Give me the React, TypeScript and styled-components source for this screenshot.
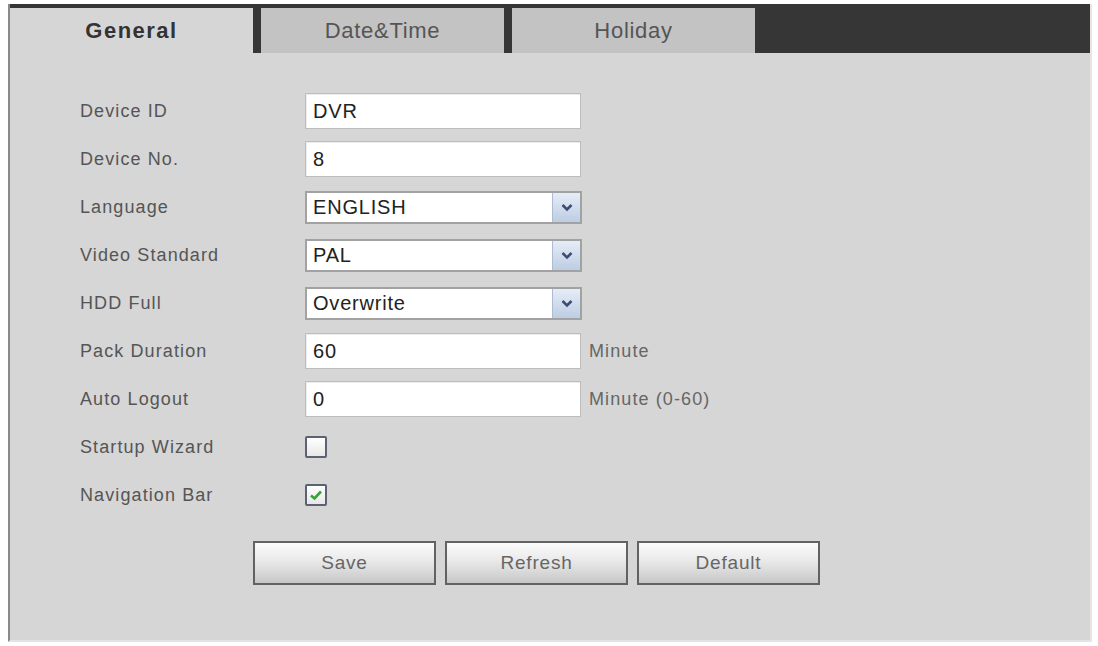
import React from 'react'
import styled, { createGlobalStyle } from 'styled-components'

const GlobalStyle = createGlobalStyle`
  body {
    margin: 0;
    background: #ffffff;
    font-family: 'Liberation Sans', Arial, sans-serif;
  }
`

const Page = styled.div`
  padding: 4px 0 0 8px;
`

const Panel = styled.div`
  width: 1084px;
  height: 638px;
  box-sizing: border-box;
  background: #d6d6d6;
  border-left: 2px solid #8a8a8a;
  border-right: 2px solid #e6e6e6;
  border-bottom: 2px solid #e4e4e4;
  display: flex;
  flex-direction: column;
`

const TabBar = styled.div`
  display: flex;
  gap: 8px;
  height: 49px;
  padding-top: 4px;
  box-sizing: border-box;
  background: #363636;
`

const Tab = styled.div<{ $active?: boolean }>`
  width: 243px;
  display: flex;
  align-items: center;
  justify-content: center;
  background: ${(p) => (p.$active ? '#d6d6d6' : '#c3c3c3')};
  color: ${(p) => (p.$active ? '#333' : '#555')};
  font-size: 22px;
  font-weight: ${(p) => (p.$active ? 'bold' : 'normal')};
  letter-spacing: ${(p) => (p.$active ? '1.5px' : '0.7px')};
`

const Form = styled.div`
  padding: 34px 0 0 70px;
`

const Row = styled.div`
  display: flex;
  align-items: center;
  height: 48px;
`

const Label = styled.div`
  width: 225px;
  color: #555;
  font-size: 18px;
  letter-spacing: 1.1px;
`

const TextInput = styled.input`
  width: 276px;
  height: 36px;
  box-sizing: border-box;
  border: 1px solid #bdbdbd;
  box-shadow: inset 1px 1px 0 #ececec;
  background: #fff;
  padding: 0 0 0 7px;
  margin: 0;
  font-family: inherit;
  font-size: 20px;
  letter-spacing: 0.8px;
  color: #222;
  outline: none;
`

const SelectBox = styled.div`
  width: 277px;
  height: 33px;
  box-sizing: border-box;
  border: 2px solid #a2a2a2;
  background: #fff;
  display: flex;
  align-items: stretch;
`

const SelectValue = styled.div`
  flex: 1;
  display: flex;
  align-items: center;
  padding-left: 6px;
  font-size: 20px;
  letter-spacing: 0.8px;
  color: #222;
`

const DropButton = styled.div`
  width: 27px;
  display: flex;
  align-items: center;
  justify-content: center;
  border-left: 1px solid #aebbd0;
  background: linear-gradient(#e6edf7, #bccde3);
`

const Suffix = styled.span`
  margin-left: 8px;
  color: #666;
  font-size: 18px;
  letter-spacing: 1.1px;
`

const CheckBox = styled.span`
  width: 22px;
  height: 22px;
  box-sizing: border-box;
  border: 2px solid #5b6372;
  border-radius: 2px;
  background: linear-gradient(#ffffff, #e7e7e7);
  display: flex;
  align-items: center;
  justify-content: center;
`

const ButtonRow = styled.div`
  display: flex;
  gap: 9px;
  margin: 22px 0 0 173px;
`

const Button = styled.button`
  width: 183px;
  height: 44px;
  box-sizing: border-box;
  border: 2px solid #626262;
  background: linear-gradient(#fbfbfb, #e9e9e9 45%, #c7c7c7);
  color: #666;
  font-family: inherit;
  font-size: 19px;
  letter-spacing: 0.8px;
  padding: 0;
`

const Chevron = () => (
  <svg width="12" height="9" viewBox="0 0 12 9">
    <path d="M1.5 2 L6 6.5 L10.5 2" fill="none" stroke="#3c4d70" strokeWidth="2.6" />
  </svg>
)

const Check = () => (
  <svg width="14" height="12" viewBox="0 0 14 12">
    <path d="M2 6.5 L5.5 9.5 L12 2.5" fill="none" stroke="#37a13a" strokeWidth="2.6" />
  </svg>
)

const Select = ({ value }: { value: string }) => (
  <SelectBox>
    <SelectValue>{value}</SelectValue>
    <DropButton>
      <Chevron />
    </DropButton>
  </SelectBox>
)

const App = () => (
  <Page>
    <GlobalStyle />
    <Panel>
      <TabBar>
        <Tab $active>General</Tab>
        <Tab>Date&amp;Time</Tab>
        <Tab>Holiday</Tab>
      </TabBar>
      <Form>
        <Row>
          <Label>Device ID</Label>
          <TextInput defaultValue="DVR" />
        </Row>
        <Row>
          <Label>Device No.</Label>
          <TextInput defaultValue="8" />
        </Row>
        <Row>
          <Label>Language</Label>
          <Select value="ENGLISH" />
        </Row>
        <Row>
          <Label>Video Standard</Label>
          <Select value="PAL" />
        </Row>
        <Row>
          <Label>HDD Full</Label>
          <Select value="Overwrite" />
        </Row>
        <Row>
          <Label>Pack Duration</Label>
          <TextInput defaultValue="60" />
          <Suffix>Minute</Suffix>
        </Row>
        <Row>
          <Label>Auto Logout</Label>
          <TextInput defaultValue="0" />
          <Suffix>Minute (0-60)</Suffix>
        </Row>
        <Row>
          <Label>Startup Wizard</Label>
          <CheckBox />
        </Row>
        <Row>
          <Label>Navigation Bar</Label>
          <CheckBox>
            <Check />
          </CheckBox>
        </Row>
        <ButtonRow>
          <Button>Save</Button>
          <Button>Refresh</Button>
          <Button>Default</Button>
        </ButtonRow>
      </Form>
    </Panel>
  </Page>
)

export default App
